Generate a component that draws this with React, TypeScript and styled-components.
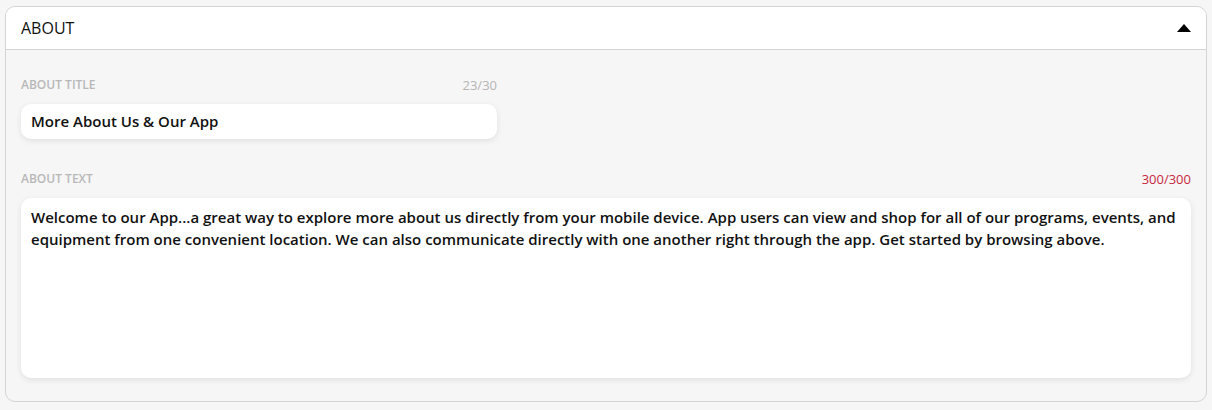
import React from "react";
import styled, { createGlobalStyle } from "styled-components";

const GlobalStyle = createGlobalStyle`
    body {
        margin: 0;
        background: #f6f6f6;
        font-family: "Open Sans", "Liberation Sans", sans-serif;
    }
`;

const Panel = styled.section`
    margin: 6px 0 0 5px;
    width: 1202px;
    box-sizing: border-box;
    border: 1px solid #d4d4d4;
    border-radius: 10px;
    background: #f6f6f6;
    overflow: hidden;
`;

const PanelHeader = styled.div`
    height: 42px;
    display: flex;
    align-items: center;
    justify-content: space-between;
    padding: 0 15px;
    background: #fff;
    border-bottom: 1px solid #d4d4d4;
`;

const PanelTitle = styled.h2`
    margin: 0;
    font-size: 16px;
    font-weight: 400;
    color: #111;
`;

const Caret = styled.span`
    width: 0;
    height: 0;
    border-left: 7px solid transparent;
    border-right: 7px solid transparent;
    border-bottom: 8px solid #000;
`;

const PanelBody = styled.div`
    padding: 26px 15px 23px;
    display: flex;
    flex-direction: column;
    gap: 31px;
`;

const Field = styled.div<{ $width?: number }>`
    display: flex;
    flex-direction: column;
    gap: 11px;
    width: ${(p) => (p.$width ? `${p.$width}px` : "100%")};
`;

const FieldHead = styled.div`
    display: flex;
    justify-content: space-between;
    align-items: center;
    height: 17px;
`;

const Label = styled.label`
    font-size: 12px;
    font-weight: 600;
    color: #b8b8b8;
    text-transform: uppercase;
`;

const Counter = styled.span<{ $full?: boolean }>`
    font-size: 13px;
    color: ${(p) => (p.$full ? "#c8283f" : "#b5b5b5")};
`;

const Box = styled.div<{ $height: number }>`
    min-height: ${(p) => p.$height}px;
    box-sizing: border-box;
    background: #fff;
    border-radius: 10px;
    box-shadow: 0 2px 6px rgba(0, 0, 0, 0.09);
    padding: ${(p) => (p.$height > 50 ? "8px 10px" : "7px 10px")};
    font-size: 15px;
    font-weight: 600;
    color: #111;
    line-height: ${(p) => (p.$height > 50 ? "22px" : "21px")};
`;

const aboutText =
    "Welcome to our App...a great way to explore more about us directly from your mobile device. App users can view and shop for all of our programs, events, and equipment from one convenient location. We can also communicate directly with one another right through the app. Get started by browsing above.";

export default function App() {
    return (
        <>
            <GlobalStyle />
            <Panel>
                <PanelHeader>
                    <PanelTitle>ABOUT</PanelTitle>
                    <Caret />
                </PanelHeader>
                <PanelBody>
                    <Field $width={476}>
                        <FieldHead>
                            <Label>About Title</Label>
                            <Counter>23/30</Counter>
                        </FieldHead>
                        <Box $height={35}>More About Us &amp; Our App</Box>
                    </Field>
                    <Field>
                        <FieldHead>
                            <Label>About Text</Label>
                            <Counter $full>300/300</Counter>
                        </FieldHead>
                        <Box $height={180}>{aboutText}</Box>
                    </Field>
                </PanelBody>
            </Panel>
        </>
    );
}
